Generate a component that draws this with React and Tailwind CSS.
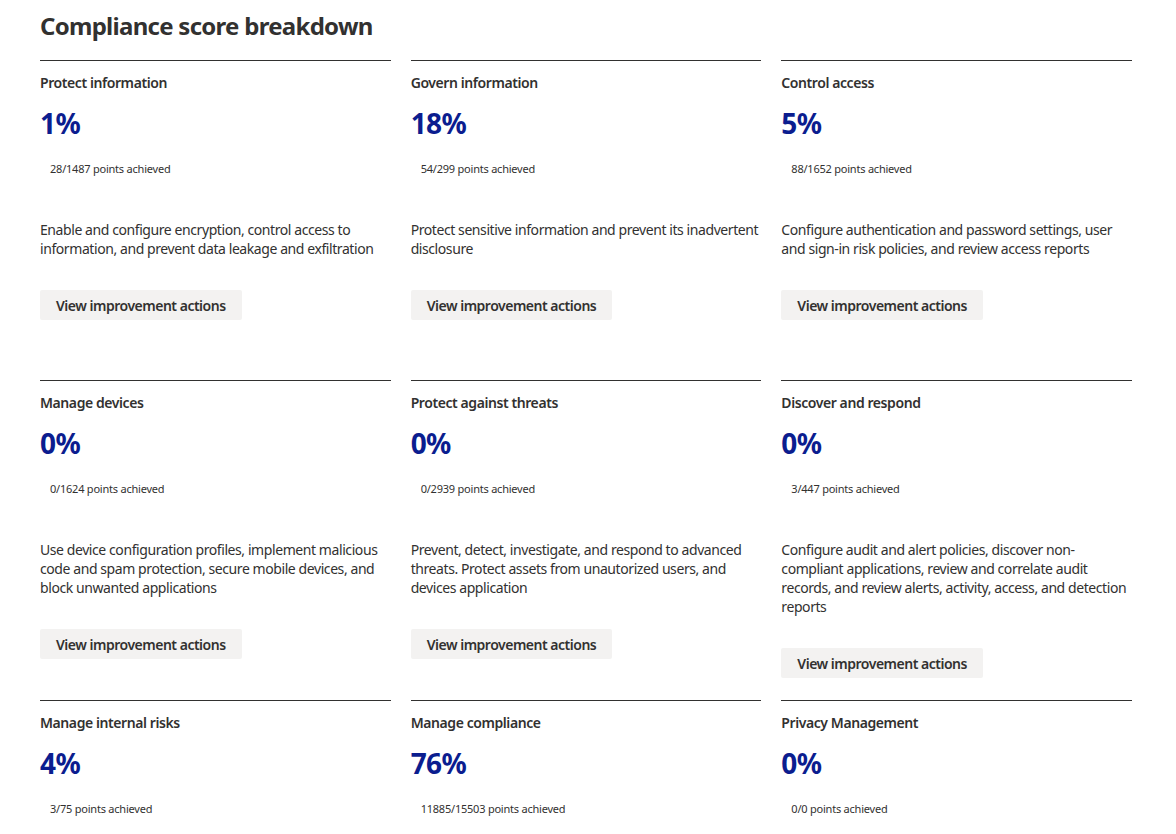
import React from "react";

const cards = [
  { title: "Protect information", pct: "1%", pts: "28/1487 points achieved", desc: "Enable and configure encryption, control access to information, and prevent data leakage and exfiltration" },
  { title: "Govern information", pct: "18%", pts: "54/299 points achieved", desc: "Protect sensitive information and prevent its inadvertent disclosure" },
  { title: "Control access", pct: "5%", pts: "88/1652 points achieved", desc: "Configure authentication and password settings, user and sign-in risk policies, and review access reports" },
  { title: "Manage devices", pct: "0%", pts: "0/1624 points achieved", desc: "Use device configuration profiles, implement malicious code and spam protection, secure mobile devices, and block unwanted applications" },
  { title: "Protect against threats", pct: "0%", pts: "0/2939 points achieved", desc: "Prevent, detect, investigate, and respond to advanced threats. Protect assets from unautorized users, and devices application" },
  { title: "Discover and respond", pct: "0%", pts: "3/447 points achieved", desc: "Configure audit and alert policies, discover non-compliant applications, review and correlate audit records, and review alerts, activity, access, and detection reports" },
  { title: "Manage internal risks", pct: "4%", pts: "3/75 points achieved", desc: "" },
  { title: "Manage compliance", pct: "76%", pts: "11885/15503 points achieved", desc: "" },
  { title: "Privacy Management", pct: "0%", pts: "0/0 points achieved", desc: "" },
];

function Card({ c }) {
  return (
    <div className="border-t border-[#323130] min-h-[320px] pt-3 flex flex-col items-start">
      <div className="text-[14px] leading-[20px] font-semibold tracking-[-0.03em] text-[#323130]">{c.title}</div>
      <div className="mt-3 text-[28px] leading-[36px] font-bold tracking-[-0.02em] text-[#0b1d8f]">{c.pct}</div>
      <div className="mt-5 pl-[10px] text-[11px] leading-[16px] tracking-[-0.02em] text-[#323130]">{c.pts}</div>
      {c.desc && (
        <>
          <div className="mt-[43px] text-[14px] leading-[19px] tracking-[-0.03em] text-[#323130]">{c.desc}</div>
          <button className="mt-8 h-[30px] px-4 bg-[#f3f2f1] rounded-[2px] text-[14px] font-semibold tracking-[-0.035em] text-[#323130]">
            View improvement actions
          </button>
        </>
      )}
    </div>
  );
}

export default function App() {
  return (
    <div className="bg-white min-h-[834px] px-10" style={{ fontFamily: '"Noto Sans", "Open Sans", sans-serif' }}>
      <h1 className="pt-[10px] text-[24px] leading-[32px] font-bold tracking-[-0.03em] text-[#323130] w-[1092px]">Compliance score breakdown</h1>
      <div className="mt-[18px] grid grid-cols-3 gap-x-5 w-[1092px]">
        {cards.map((c) => (
          <Card key={c.title} c={c} />
        ))}
      </div>
    </div>
  );
}
